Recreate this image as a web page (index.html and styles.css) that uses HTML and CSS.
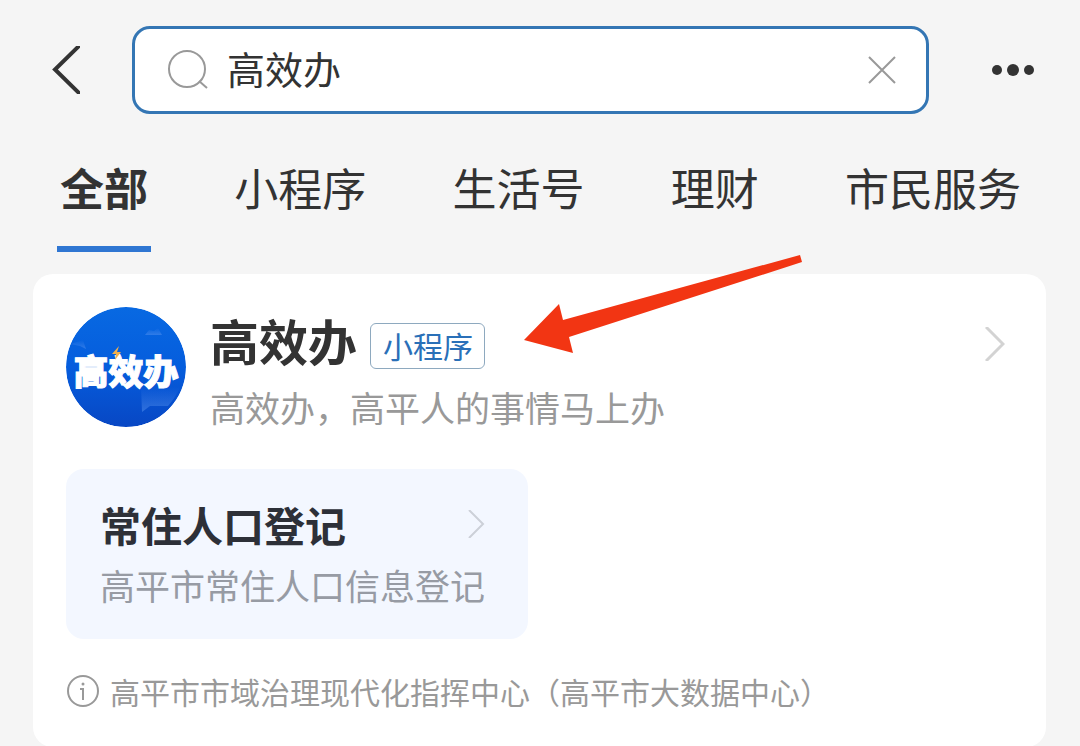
FILE: index.html
```html
<!DOCTYPE html>
<html lang="zh-CN">
<head>
<meta charset="utf-8">
<meta name="viewport" content="width=device-width, initial-scale=1">
<title>高效办</title>
<link rel="stylesheet" href="styles.css">
</head>
<body>
<div class="page">
  <header class="topbar">
    <button class="icon-button" type="button" aria-label="返回">
      <svg width="28" height="48" viewBox="0 0 28 48" fill="none" stroke="#333" stroke-width="4"><path d="M28 -1 3 23.500l25 24.500"/></svg>
    </button>
    <form class="search" role="search">
      <svg class="search-icon" width="42" height="42" viewBox="0 0 42 42" fill="none" stroke="#999" stroke-width="2"><circle cx="20" cy="20" r="18"/><path d="m32 32 8 7"/></svg>
      <input class="search-input" type="text" value="高效办" aria-label="搜索">
      <button class="icon-button" type="reset" aria-label="清除">
        <svg width="28" height="28" viewBox="0 0 28 28" fill="none" stroke="#999" stroke-width="2"><path d="m1 1 26 26M27 1 1 27"/></svg>
      </button>
    </form>
    <button class="icon-button" type="button" aria-label="更多">
      <svg width="42" height="12" viewBox="0 0 42 12" fill="#333"><circle cx="5" cy="6" r="5"/><circle cx="21" cy="6" r="6"/><circle cx="37" cy="6" r="5"/></svg>
    </button>
  </header>

  <nav class="tabs">
    <a class="tab tab-active" href="#all" aria-current="page">全部</a>
    <a class="tab" href="#mini">小程序</a>
    <a class="tab" href="#life">生活号</a>
    <a class="tab" href="#finance">理财</a>
    <a class="tab" href="#civic">市民服务</a>
  </nav>

  <main class="card">
    <a class="result" href="#app">
      <svg class="logo" width="120" height="120" viewBox="0 0 120 120" aria-hidden="true">
        <defs>
          <linearGradient id="sky" x1="0" y1="0" x2="0" y2="1"><stop offset="0" stop-color="#0869e2"/><stop offset=".5" stop-color="#055ddd"/><stop offset="1" stop-color="#0847c4"/></linearGradient>
          <linearGradient id="haze" x1="0" y1="0" x2="0" y2="1"><stop offset="0" stop-color="#5a95f0" stop-opacity="0"/><stop offset="1" stop-color="#5a95f0" stop-opacity=".5"/></linearGradient>
        </defs>
        <circle cx="60" cy="60" r="60" fill="url(#sky)"/>
        <path d="M79 28 83 23 88 24 92 21 96 28Z" fill="url(#haze)"/>
        <path d="M4 37 17 33 20 42 14 39Z" fill="url(#haze)"/>
        <path d="M75 80H114Q110 90 102 99H84L76 105Z" fill="url(#haze)"/>
        <text class="logo-text" x="60" y="78" text-anchor="middle">高效办</text>
        <path d="m53 39-7 8h4l-1 6 6-8h-4Z" fill="#f2b04b"/>
      </svg>
      <div class="result-info">
        <div class="result-head">
          <h1 class="result-title">高效办</h1>
          <span class="tag">小程序</span>
        </div>
        <p class="result-desc">高效办，高平人的事情马上办</p>
      </div>
      <svg class="result-arrow" width="20" height="34" viewBox="0 0 20 34" fill="none" stroke="#d3d3d3" stroke-width="3"><path d="m1 0 17 17L1 34"/></svg>
    </a>

    <a class="service" href="#register">
      <span class="service-head">
        <span class="service-title">常住人口登记</span>
        <svg width="17" height="28" viewBox="0 0 17 28" fill="none" stroke="#ccd0d8" stroke-width="2"><path d="m1 0 14 14L1 28"/></svg>
      </span>
      <span class="service-desc">高平市常住人口信息登记</span>
    </a>

    <p class="provider">
      <svg width="34" height="34" viewBox="0 0 34 34" fill="none" stroke="#999" stroke-width="2"><circle cx="17" cy="17" r="15"/><path d="M14 15h3v11"/><circle cx="17" cy="10" r="1.5" fill="#999" stroke="none"/></svg>
      <span>高平市市域治理现代化指挥中心（高平市大数据中心）</span>
    </p>
  </main>

  <svg class="pointer" width="278" height="98" viewBox="0 0 278 98" aria-hidden="true"><path d="M0 85 35 49 39 65 276 0 278 7 45 82 49 98Z" fill="#f23513"/></svg>
</div>
</body>
</html>
```

FILE: styles.css
```css
* {
  box-sizing: border-box;
}

body {
  margin: 0;
  background: #f5f5f5;
  color: #333;
  font-family: "Noto Sans CJK SC", sans-serif;
}

a {
  color: inherit;
  text-decoration: none;
}

h1,
p {
  margin: 0;
}

svg {
  display: block;
  flex: none;
}

.page {
  position: relative;
  overflow: hidden;
}

.topbar {
  display: flex;
  align-items: center;
  padding: 26px 46px 0 52px;
}

.icon-button {
  flex: none;
  padding: 0;
  border: 0;
  background: none;
}

.search {
  display: flex;
  flex: 1;
  align-items: center;
  min-width: 0;
  height: 88px;
  margin: 0 63px 0 52px;
  padding: 0 30px 0 32px;
  border: 3px solid #3476b4;
  border-radius: 18px;
  background: #fff;
}

.search-input {
  flex: 1;
  min-width: 0;
  margin-left: 18px;
  padding: 0 0 4px;
  border: 0;
  outline: 0;
  background: none;
  color: #333;
  font: 38px/56px "Noto Sans CJK SC", sans-serif;
}

.tabs {
  display: flex;
  justify-content: space-between;
  padding: 42px 56px 0 57px;
}

.tab {
  height: 96px;
  padding: 0 3px;
  font-size: 44px;
  line-height: 62px;
  white-space: nowrap;
}

.tab-active {
  border-bottom: 6px solid #2f76d2;
  font-weight: 700;
}

.card {
  margin: 22px 34px 0 33px;
  padding: 33px 33px 34px;
  border-radius: 20px;
  background: #fff;
}

.result {
  display: flex;
  gap: 24px;
}

.logo {
  border-radius: 50%;
}

.logo-text {
  fill: #fff;
  stroke: #fff;
  stroke-width: 1px;
  font-size: 35px;
  font-weight: 900;
}

.result-info {
  flex: 1;
}

.result-head {
  display: flex;
  align-items: flex-end;
  gap: 13px;
}

.result-title {
  font-size: 49px;
  line-height: 66px;
}

.tag {
  margin-bottom: 4px;
  padding: 0 11px 2px 12px;
  border: 1px solid #8ea9bf;
  border-radius: 6px;
  color: #2a70b8;
  font-size: 30px;
  line-height: 42px;
}

.result-desc {
  margin-top: 9px;
  color: #999;
  font-size: 35px;
  line-height: 50px;
}

.result-arrow {
  margin: 20px 8px 0 0;
}

.service {
  display: flex;
  flex-direction: column;
  width: fit-content;
  margin-top: 37px;
  padding: 30px 43px 30px 34px;
  border-radius: 18px;
  background: #f3f7ff;
}

.service-head {
  display: flex;
  align-items: center;
  justify-content: space-between;
}

.service-title {
  color: #2d3038;
  font-size: 41px;
  font-weight: 700;
  line-height: 50px;
}

.service-desc {
  margin-top: 12px;
  color: #979ba4;
  font-size: 35px;
  line-height: 48px;
}

.provider {
  display: flex;
  align-items: center;
  gap: 10px;
  margin-top: 30px;
  color: #999;
  font-size: 30px;
  line-height: 44px;
}

.pointer {
  position: absolute;
  top: 255px;
  left: 524px;
}
```
